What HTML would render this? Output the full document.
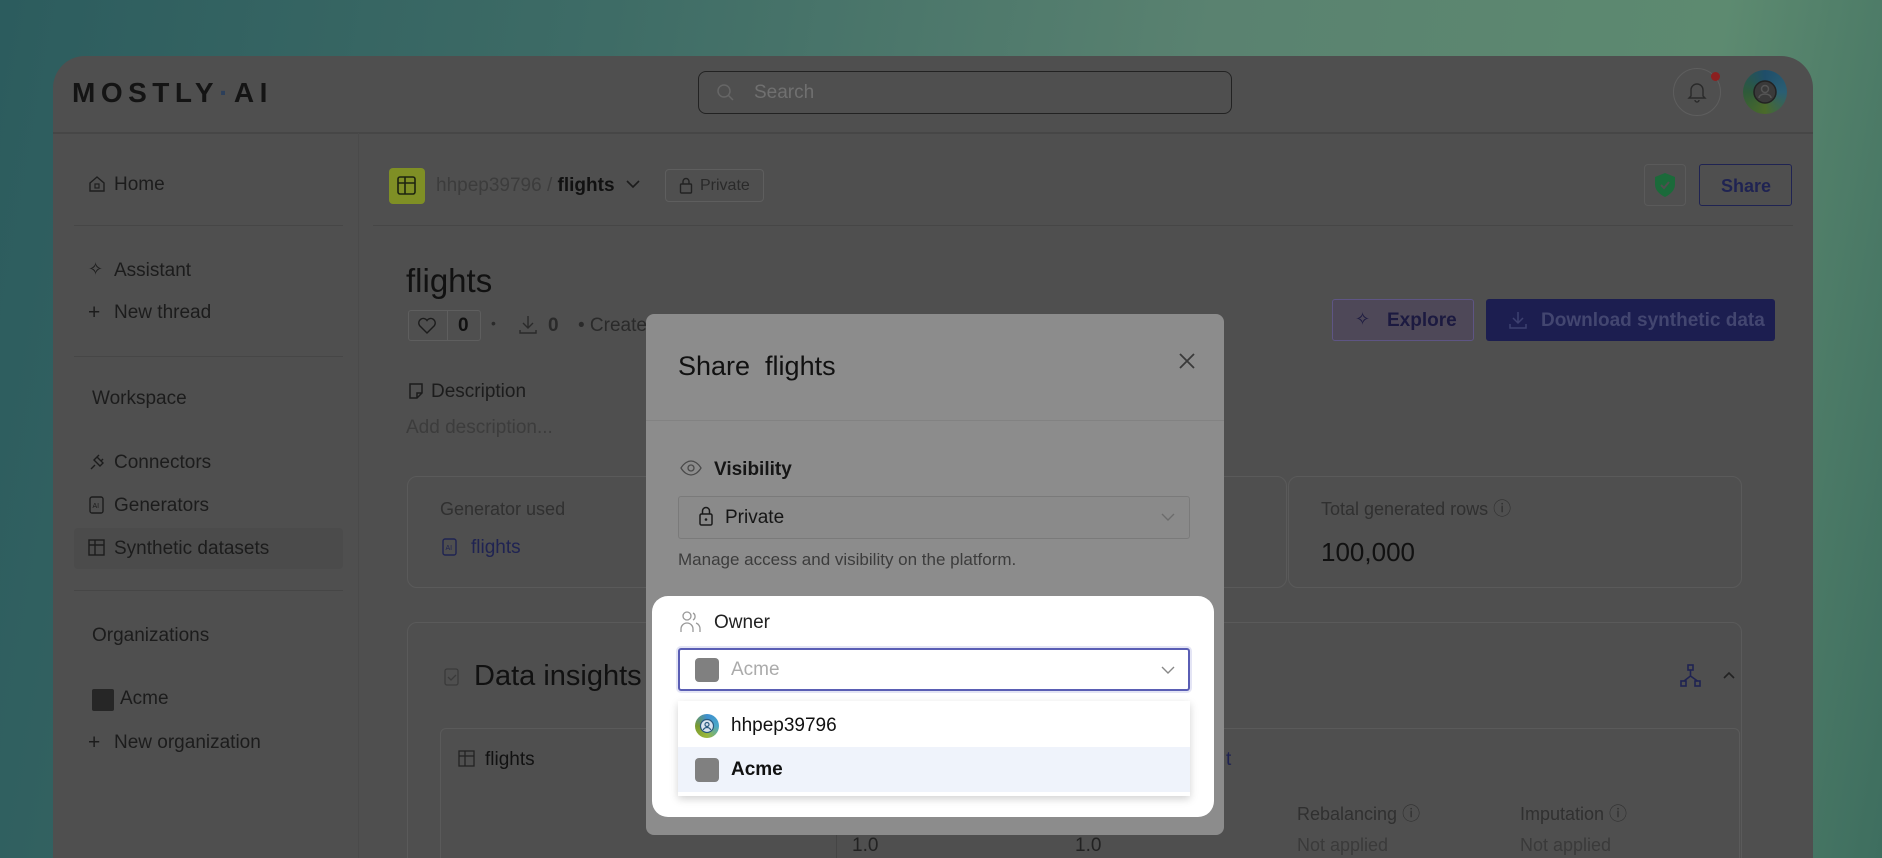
<!DOCTYPE html>
<html><head><meta charset="utf-8"><style>
*{margin:0;padding:0;box-sizing:border-box}
html{width:1882px;height:858px;overflow:hidden}
body{width:1882px;height:858px;overflow:hidden;position:relative;font-family:"Liberation Sans",sans-serif;
background:linear-gradient(100deg,#2c5c5e 0%,#3e6c66 30%,#5a8270 60%,#5d8a70 85%,#3e6e5f 100%);}
.a{position:absolute;white-space:nowrap;line-height:1}
.win{position:absolute;left:53px;top:56px;width:1760px;height:802px;background:#4f4f4f;border-radius:32px 32px 0 0;overflow:hidden}
.ln{position:absolute;background:#464646}
.card{position:absolute;border:1px solid #5a5a5a;border-radius:10px}
svg{position:absolute;overflow:visible}
.clip{position:absolute;left:0;top:0;width:1882px;height:858px;overflow:hidden}
</style></head><body>
<div class="clip">
<div class="win"></div>
<div class="ln" style="left:53px;top:132px;width:1760px;height:2px"></div>
<div class="a" style="left:72px;top:79px;font-size:28px;font-weight:bold;letter-spacing:5.5px;color:#141414">MOSTLY<span style="color:#2c3f5a">·</span>AI</div>
<div style="position:absolute;left:698px;top:71px;width:534px;height:43px;border:1.5px solid #222;border-radius:8px"></div>
<svg style="left:716px;top:83px" width="20" height="20"><circle cx="8" cy="8" r="6" fill="none" stroke="#666" stroke-width="1.5"/><path d="M12.5 12.5L17 17" stroke="#666" stroke-width="1.5"/></svg>
<div class="a" style="left:754px;top:83px;font-size:19px;color:#707070">Search</div>
<div style="position:absolute;left:1673px;top:68px;width:48px;height:48px;border:1.5px solid #5e5e5e;border-radius:50%"></div>
<svg style="left:1687px;top:80px" width="20" height="24"><path d="M4 16V10a6 6 0 0 1 12 0v6l2 2H2z M8 20a2 2 0 0 0 4 0" fill="none" stroke="#2a2a2a" stroke-width="1.4"/></svg>
<div style="position:absolute;left:1711px;top:72px;width:9px;height:9px;border-radius:50%;background:#8c1f1f"></div>
<div style="position:absolute;left:1743px;top:70px;width:44px;height:44px;border-radius:50%;background:conic-gradient(#1f4e6a,#2a5e73,#4b6a2a,#2e5a3a,#1f4e6a)"></div>
<svg style="left:1751px;top:78px" width="28" height="28"><circle cx="14" cy="14" r="11" fill="#3a3a3a" stroke="#222" stroke-width="1.5"/><circle cx="14" cy="11" r="3.5" fill="none" stroke="#555" stroke-width="1.5"/><path d="M8 20a6 4 0 0 1 12 0" fill="none" stroke="#555" stroke-width="1.5"/></svg>
<div style="position:absolute;left:74px;top:528px;width:269px;height:41px;background:#4b4b4b;border-radius:4px"></div>
<div class="ln" style="left:74px;top:225px;width:269px;height:1px"></div>
<div class="ln" style="left:74px;top:356px;width:269px;height:1px"></div>
<div class="ln" style="left:74px;top:590px;width:269px;height:1px"></div>
<div class="ln" style="left:358px;top:133px;width:1px;height:725px;background:#4a4a4a"></div>
<svg style="left:88px;top:175px" width="18" height="18"><path d="M2 8L9 2l7 6v8H2z" fill="none" stroke="#1e1e1e" stroke-width="1.4"/><rect x="7" y="9" width="4" height="4" fill="none" stroke="#1e1e1e" stroke-width="1.2"/></svg>
<div class="a" style="left:114px;top:175px;font-size:19px;color:#1c1c1c">Home</div>
<div class="a" style="left:88px;top:260px;font-size:18px;color:#1c1c1c">✧</div>
<div class="a" style="left:114px;top:261px;font-size:19px;color:#1c1c1c">Assistant</div>
<div class="a" style="left:88px;top:302px;font-size:21px;color:#1c1c1c">+</div>
<div class="a" style="left:114px;top:303px;font-size:19px;color:#1c1c1c">New thread</div>
<div class="a" style="left:92px;top:389px;font-size:19px;color:#1c1c1c">Workspace</div>
<svg style="left:88px;top:453px" width="18" height="18"><path d="M3 16l4-4m2-8l-3 3 6 6 3-3zM11 2l-2 2m6 2l-2 2" fill="none" stroke="#1c1c1c" stroke-width="1.4"/></svg>
<div class="a" style="left:114px;top:453px;font-size:19px;color:#1c1c1c">Connectors</div>
<svg style="left:88px;top:496px" width="18" height="18"><rect x="2" y="1" width="13" height="16" rx="2" fill="none" stroke="#1c1c1c" stroke-width="1.4"/><text x="4.5" y="12" font-size="7" font-family="Liberation Sans" fill="#1c1c1c">AI</text></svg>
<div class="a" style="left:114px;top:496px;font-size:19px;color:#1c1c1c">Generators</div>
<svg style="left:88px;top:539px" width="18" height="18"><rect x="1" y="1" width="15" height="15" fill="none" stroke="#1c1c1c" stroke-width="1.4"/><path d="M1 6h15M7 1v15" stroke="#1c1c1c" stroke-width="1.4"/></svg>
<div class="a" style="left:114px;top:539px;font-size:19px;color:#1c1c1c">Synthetic datasets</div>
<div class="a" style="left:92px;top:626px;font-size:19px;color:#1c1c1c">Organizations</div>
<div style="position:absolute;left:92px;top:689px;width:22px;height:22px;background:#262626;border-radius:2px"></div>
<div class="a" style="left:120px;top:689px;font-size:19px;color:#1c1c1c">Acme</div>
<div class="a" style="left:88px;top:732px;font-size:21px;color:#1c1c1c">+</div>
<div class="a" style="left:114px;top:733px;font-size:19px;color:#1c1c1c">New organization</div>
<div class="ln" style="left:373px;top:225px;width:1420px;height:1px"></div>
<div style="position:absolute;left:389px;top:168px;width:36px;height:36px;background:#7f8f25;border-radius:4px"></div>
<svg style="left:396px;top:175px" width="22" height="22"><rect x="2" y="2" width="17" height="17" rx="2" fill="none" stroke="#1d2410" stroke-width="1.6"/><path d="M2 8h17M9 2v17" stroke="#1d2410" stroke-width="1.6"/></svg>
<div class="a" style="left:436px;top:176px;font-size:19px;color:#3c3c3c">hhpep39796 / <span style="color:#111;font-weight:bold">flights</span></div>
<svg style="left:625px;top:179px" width="16" height="10"><path d="M2 2l6 6 6-6" fill="none" stroke="#1c1c1c" stroke-width="1.6"/></svg>
<div style="position:absolute;left:665px;top:169px;width:99px;height:33px;border:1px solid #5e5e5e;border-radius:4px"></div>
<svg style="left:679px;top:177px" width="14" height="17"><rect x="1.5" y="7" width="11" height="9" rx="1" fill="none" stroke="#222" stroke-width="1.4"/><path d="M4 7V4.5a3 3 0 0 1 6 0V7" fill="none" stroke="#222" stroke-width="1.4"/></svg>
<div class="a" style="left:700px;top:178px;font-size:16px;color:#2a2a2a">Private</div>
<div style="position:absolute;left:1644px;top:164px;width:42px;height:42px;border:1px solid #5a5a5a;border-radius:4px"></div>
<svg style="left:1653px;top:172px" width="24" height="26"><path d="M12 1l10 4v7c0 6-4 10-10 13C6 22 2 18 2 12V5z" fill="#1b6a3a"/><path d="M8 13l3 3 5-6" fill="none" stroke="#4f4f4f" stroke-width="2"/></svg>
<div style="position:absolute;left:1699px;top:164px;width:93px;height:42px;border:1.5px solid #1f2352;border-radius:3px"></div>
<div class="a" style="left:1721px;top:177px;font-size:18px;font-weight:bold;color:#1f2352">Share</div>
<div class="a" style="left:406px;top:264px;font-size:33px;color:#111">flights</div>
<div style="position:absolute;left:408px;top:310px;width:73px;height:31px;border:1px solid #5e5e5e;border-radius:3px"></div>
<div class="ln" style="left:447px;top:310px;width:1px;height:31px;background:#5e5e5e"></div>
<svg style="left:417px;top:317px" width="20" height="18"><path d="M10 16L2.5 8.5a4 4 0 0 1 7.5-5 4 4 0 0 1 7.5 5z" fill="none" stroke="#1c1c1c" stroke-width="1.4"/></svg>
<div class="a" style="left:458px;top:316px;font-size:19px;font-weight:bold;color:#111">0</div>
<div class="a" style="left:491px;top:316px;font-size:14px;color:#2a2a2a">•</div>
<svg style="left:518px;top:314px" width="20" height="22"><path d="M10 2v12M5 9l5 5 5-5M2 16v3h16v-3" fill="none" stroke="#2a2a2a" stroke-width="1.4"/></svg>
<div class="a" style="left:548px;top:316px;font-size:19px;font-weight:bold;color:#2a2a2a">0</div>
<div class="a" style="left:578px;top:316px;font-size:19px;color:#2a2a2a">• Create</div>
<div style="position:absolute;left:1332px;top:299px;width:142px;height:42px;background:#4e4858;border:1.5px solid #5e5584;border-radius:3px"></div>
<div class="a" style="left:1355px;top:310px;font-size:18px;color:#1c1a40">✧</div>
<div class="a" style="left:1387px;top:311px;font-size:19px;font-weight:bold;color:#1c1a40">Explore</div>
<div style="position:absolute;left:1486px;top:299px;width:289px;height:42px;background:#1c1e50;border-radius:3px"></div>
<svg style="left:1508px;top:310px" width="20" height="20"><path d="M10 2v11M5 8l5 5 5-5M2 14v4h16v-4" fill="none" stroke="#3d4070" stroke-width="1.5"/></svg>
<div class="a" style="left:1541px;top:311px;font-size:19px;font-weight:bold;color:#434670">Download synthetic data</div>
<svg style="left:408px;top:382px" width="16" height="18"><path d="M2 2h12v9l-5 5H2z M9 16v-5h5" fill="none" stroke="#1c1c1c" stroke-width="1.5"/></svg>
<div class="a" style="left:431px;top:382px;font-size:19px;color:#1c1c1c">Description</div>
<div class="a" style="left:406px;top:418px;font-size:19px;color:#3c3c3c">Add description...</div>
<div class="card" style="left:407px;top:476px;width:880px;height:112px"></div>
<div class="card" style="left:1288px;top:476px;width:454px;height:112px"></div>
<div class="a" style="left:440px;top:500px;font-size:18px;color:#303030">Generator used</div>
<svg style="left:442px;top:538px" width="16" height="18"><rect x="1" y="1" width="13" height="16" rx="2" fill="none" stroke="#1f2352" stroke-width="1.4"/><text x="3.5" y="12" font-size="7" font-family="Liberation Sans" fill="#1f2352">AI</text></svg>
<div class="a" style="left:471px;top:538px;font-size:19px;color:#1f2352">flights</div>
<div class="a" style="left:1321px;top:500px;font-size:18px;color:#303030">Total generated rows ⓘ</div>
<div class="a" style="left:1321px;top:539px;font-size:26px;color:#111">100,000</div>
<div class="card" style="left:407px;top:622px;width:1335px;height:260px"></div>
<svg style="left:444px;top:666px" width="16" height="20"><rect x="1" y="3" width="13" height="16" rx="2" fill="none" stroke="#3a3a3a" stroke-width="1.3"/><path d="M4 11l3 3 5-5" fill="none" stroke="#3a3a3a" stroke-width="1.3"/></svg>
<div class="a" style="left:474px;top:662px;font-size:29px;color:#111">Data insights</div>
<svg style="left:1680px;top:664px" width="22" height="24"><rect x="8" y="1" width="5" height="5" fill="none" stroke="#1f2352" stroke-width="1.6"/><rect x="1" y="17" width="5" height="5" fill="none" stroke="#1f2352" stroke-width="1.6"/><rect x="15" y="17" width="5" height="5" fill="none" stroke="#1f2352" stroke-width="1.6"/><path d="M10.5 6v6L4 17M10.5 12l7 5" fill="none" stroke="#1f2352" stroke-width="1.6"/></svg>
<svg style="left:1722px;top:670px" width="14" height="10"><path d="M2 8l5-5 5 5" fill="none" stroke="#222" stroke-width="1.6"/></svg>
<div class="card" style="left:440px;top:728px;width:1300px;height:160px;border-radius:6px"></div>
<svg style="left:458px;top:750px" width="18" height="18"><rect x="1" y="1" width="15" height="15" fill="none" stroke="#222" stroke-width="1.3"/><path d="M1 6h15M7 1v15" stroke="#222" stroke-width="1.3"/></svg>
<div class="a" style="left:485px;top:750px;font-size:19px;color:#111">flights</div>
<div class="ln" style="left:836px;top:822px;width:1px;height:40px;background:#454545"></div>
<div class="a" style="left:852px;top:836px;font-size:19px;color:#222">1.0</div>
<div class="a" style="left:1075px;top:836px;font-size:19px;color:#222">1.0</div>
<div class="a" style="left:1297px;top:805px;font-size:18px;color:#303030">Rebalancing ⓘ</div>
<div class="a" style="left:1297px;top:836px;font-size:18px;color:#3a3a3a">Not applied</div>
<div class="a" style="left:1520px;top:805px;font-size:18px;color:#303030">Imputation ⓘ</div>
<div class="a" style="left:1520px;top:836px;font-size:18px;color:#3a3a3a">Not applied</div>
<div class="a" style="left:1226px;top:750px;font-size:19px;color:#1f2352">t</div>
<div style="position:absolute;left:646px;top:314px;width:578px;height:521px;background:#8c8c8c;border-radius:8px"></div>
<div class="a" style="left:678px;top:353px;font-size:27px;color:#111">Share&nbsp; flights</div>
<svg style="left:1178px;top:352px" width="18" height="18"><path d="M2 2l14 14M16 2L2 16" stroke="#3a3a3a" stroke-width="1.8"/></svg>
<div class="ln" style="left:646px;top:420px;width:578px;height:1px;background:#828282"></div>
<svg style="left:680px;top:459px" width="22" height="20"><path d="M1 9c3-5 7-7 10-7s7 2 10 7c-3 5-7 7-10 7S4 14 1 9z" fill="none" stroke="#4a4a4a" stroke-width="1.3"/><circle cx="11" cy="9" r="3" fill="none" stroke="#4a4a4a" stroke-width="1.3"/></svg>
<div class="a" style="left:714px;top:460px;font-size:19px;font-weight:bold;color:#151515">Visibility</div>
<div style="position:absolute;left:678px;top:496px;width:512px;height:43px;border:1px solid #7a7a7a;border-radius:3px;background:#8a8a8a"></div>
<svg style="left:698px;top:505px" width="16" height="22"><rect x="2" y="9" width="12" height="11" rx="1.5" fill="none" stroke="#1a1a1a" stroke-width="1.5"/><path d="M4.5 9V6a3.5 3.5 0 0 1 7 0v3" fill="none" stroke="#1a1a1a" stroke-width="1.5"/><circle cx="8" cy="14.5" r="1.3" fill="#1a1a1a"/></svg>
<div class="a" style="left:725px;top:508px;font-size:19px;color:#151515">Private</div>
<svg style="left:1160px;top:512px" width="16" height="10"><path d="M2 2l6 6 6-6" fill="none" stroke="#6c6c6c" stroke-width="1.4"/></svg>
<div class="a" style="left:678px;top:551px;font-size:17px;color:#3c3c3c">Manage access and visibility on the platform.</div>
<div style="position:absolute;left:1072px;top:782px;width:118px;height:20px;background:#2a2e80"></div>
<div style="position:absolute;left:652px;top:596px;width:562px;height:221px;background:#fff;border-radius:16px"></div>
<svg style="left:680px;top:610px" width="22" height="24"><circle cx="7" cy="6" r="4" fill="none" stroke="#999" stroke-width="1.3"/><path d="M1 22v-3a6 6 0 0 1 12 0v3M13 3a4 4 0 0 1 0 7M16 13a6 6 0 0 1 4 6v3" fill="none" stroke="#999" stroke-width="1.3"/></svg>
<div class="a" style="left:714px;top:613px;font-size:19px;color:#222">Owner</div>
<div style="position:absolute;left:678px;top:648px;width:512px;height:43px;border:2px solid #5a5eb4;border-radius:3px;box-shadow:0 0 0 2px #e4e5f5"></div>
<div style="position:absolute;left:695px;top:658px;width:24px;height:24px;background:#808080;border-radius:4px"></div>
<div class="a" style="left:731px;top:660px;font-size:19px;color:#ababab">Acme</div>
<svg style="left:1160px;top:665px" width="16" height="10"><path d="M2 2l6 6 6-6" fill="none" stroke="#888" stroke-width="1.4"/></svg>
<div style="position:absolute;left:678px;top:701px;width:512px;height:95px;background:#fff;box-shadow:0 3px 8px rgba(0,0,0,.18)"></div>
<div style="position:absolute;left:678px;top:747px;width:512px;height:45px;background:#eff3fb"></div>
<div style="position:absolute;left:695px;top:714px;width:24px;height:24px;border-radius:50%;background:conic-gradient(#3d8fd0,#4aa8c8,#9bb83a,#7a9a30,#3d8fd0)"></div>
<svg style="left:699px;top:718px" width="16" height="16"><circle cx="8" cy="8" r="6.5" fill="#d9e4ef" stroke="#2a5a80" stroke-width="1.2"/><circle cx="8" cy="6.5" r="2" fill="none" stroke="#2a5a80" stroke-width="1.2"/><path d="M4.5 12a3.5 2.5 0 0 1 7 0" fill="none" stroke="#2a5a80" stroke-width="1.2"/></svg>
<div class="a" style="left:731px;top:716px;font-size:19px;color:#111">hhpep39796</div>
<div style="position:absolute;left:695px;top:758px;width:24px;height:24px;background:#808080;border-radius:4px"></div>
<div class="a" style="left:731px;top:760px;font-size:19px;font-weight:bold;color:#111">Acme</div>
</div>
</body></html>
